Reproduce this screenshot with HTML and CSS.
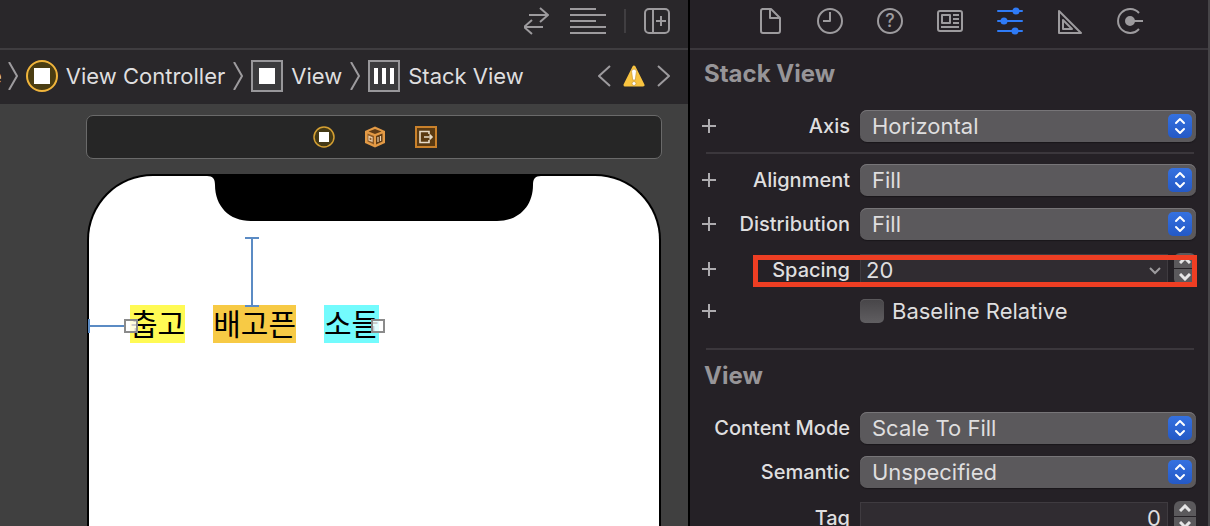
FILE: index.html
```html
<!DOCTYPE html>
<html lang="en">
<head>
    <meta charset="UTF-8">
    <title>Interface Builder</title>
    <link rel="stylesheet" href="styles.css">
</head>
<body>
    <main class="editor">
        <div class="toolbar">
            <button class="icon-button" aria-label="Refresh">
                <svg class="line-icon" width="28" height="28" viewBox="0 0 28 28"><path d="M5 8H24M16 1l8 7-8 7M19 20H0M8 13l-8 7 8 7"/></svg>
            </button>
            <button class="icon-button" aria-label="Adjust editor options">
                <svg class="line-icon" width="36" height="28" viewBox="0 0 36 28"><path d="M0 2h26M0 8h36M0 14h26M0 20h36M0 26h36"/></svg>
            </button>
            <span class="toolbar-divider"></span>
            <button class="icon-button" aria-label="Add editor">
                <svg class="line-icon" width="26" height="28" viewBox="0 0 26 28"><rect x="1" y="2" width="24" height="24" rx="4"/><path d="M9 2v24M17 9v10M12 14h10"/></svg>
            </button>
        </div>
        <div class="jump-bar">
            <nav class="crumbs">
                <span class="crumb crumb-cut">e</span>
                <svg class="line-icon" width="10" height="28" viewBox="0 0 10 28"><path d="M1 0l8 14-8 14"/></svg>
                <svg width="32" height="32" viewBox="0 0 32 32"><circle cx="16" cy="16" r="15" fill="#4a3d12" stroke="#f0b53c" stroke-width="2"/><path fill="#fff" d="M8 8h16v16H8z"/></svg>
                <span class="crumb">View Controller</span>
                <svg class="line-icon" width="10" height="28" viewBox="0 0 10 28"><path d="M1 0l8 14-8 14"/></svg>
                <svg width="32" height="32" viewBox="0 0 32 32"><path fill="#3b3b3d" stroke="#98979a" stroke-width="2" d="M1 1h30v30H1z"/><path fill="#fff" d="M8 8h16v16H8z"/></svg>
                <span class="crumb">View</span>
                <svg class="line-icon" width="10" height="28" viewBox="0 0 10 28"><path d="M1 0l8 14-8 14"/></svg>
                <svg width="32" height="32" viewBox="0 0 32 32"><path fill="#3b3b3d" stroke="#98979a" stroke-width="2" d="M1 1h30v30H1z"/><path fill="#fff" d="M6 8h4v16H6zM14 8h4v16h-4zM22 8h4v16h-4z"/></svg>
                <span class="crumb">Stack View</span>
            </nav>
            <div class="issues">
                <button class="icon-button" aria-label="Previous issue">
                    <svg class="line-icon" width="13" height="24" viewBox="0 0 13 24"><path d="M12 2L1 12l11 10"/></svg>
                </button>
                <svg width="22" height="24" viewBox="0 0 22 24"><path fill="#f9c440" stroke="#f9c440" stroke-width="3" stroke-linejoin="round" d="M11 3l9 18H2z"/><path fill="#fff" stroke="#c99a3a" stroke-width=".7" d="M8.600 7.500a2.400 2.400 0 0 1 4.800 0L12.300 16H9.700z"/><circle cx="11" cy="19.500" r="2" fill="#fff" stroke="#c99a3a" stroke-width=".7"/></svg>
                <button class="icon-button" aria-label="Next issue">
                    <svg class="line-icon" width="13" height="24" viewBox="0 0 13 24"><path d="M1 2l11 10L1 22"/></svg>
                </button>
            </div>
        </div>
        <div class="canvas">
            <div class="scene-dock">
                <svg width="22" height="22" viewBox="0 0 22 22"><circle cx="11" cy="11" r="10" fill="#453a16" stroke="#d5a032" stroke-width="1.500"/><path fill="#fff" d="M6 6h10v10H6z"/></svg>
                <svg width="22" height="22" viewBox="0 0 22 22">
                    <path fill="#e39a45" d="M11 .5l10 4.500v12l-10 4.500L1 17V5z"/>
                    <path fill="#5e3b16" d="M11 3l6.500 2.500L11 8 4.500 5.500z"/>
                    <path fill="#8d5b27" d="M3.500 7.500L10 10v8.500l-6.500-3z"/>
                    <path fill="#5e3b16" d="M18.500 7.500L12 10v8.500l6.500-3z"/>
                    <path fill="none" stroke="#e9cfae" stroke-width="1.200" d="M5 10.500v3.500l3 1.200v-3.500zM14 11v5M16.500 10v5"/>
                </svg>
                <svg width="22" height="22" viewBox="0 0 22 22"><path fill="#5a3a12" stroke="#c9812b" stroke-width="2" d="M1 1h20v20H1z"/><path fill="none" stroke="#e8dcc8" stroke-width="1.600" d="M14 8V5.500H5v11h9V14M9 11h8M14.500 8.500L17 11l-2.500 2.500"/></svg>
            </div>
            <div class="device">
                <svg class="notch" width="334" height="45" viewBox="0 0 334 45"><path d="M0 0H334C328 0 326 3 326 9C326 30 312 45 290 45H44C22 45 8 30 8 9C8 3 6 0 0 0Z"/></svg>
                <div class="stack-view" lang="ko">
                    <span class="label yellow">춥고</span>
                    <span class="label orange">배고픈</span>
                    <span class="label cyan">소들</span>
                    <span class="constraint leading"></span>
                    <span class="constraint top"></span>
                    <span class="handle handle-left"></span>
                    <span class="handle handle-right"></span>
                </div>
            </div>
        </div>
    </main>

    <aside class="inspector">
        <div class="tabs">
            <button class="icon-button" aria-label="File inspector">
                <svg class="line-icon" width="28" height="28" viewBox="0 0 28 28"><path d="M6 2h9l9 9v13a2 2 0 0 1-2 2H7a2 2 0 0 1-2-2V4a2 2 0 0 1 2-2M14 2v9h9"/></svg>
            </button>
            <button class="icon-button" aria-label="History inspector">
                <svg class="line-icon" width="28" height="28" viewBox="0 0 28 28"><circle cx="14" cy="14" r="12"/><path d="M14 5v9H7"/></svg>
            </button>
            <button class="icon-button" aria-label="Help inspector">
                <svg class="line-icon" width="28" height="28" viewBox="0 0 28 28"><circle cx="14" cy="14" r="12"/><text class="help-mark" x="14" y="20">?</text></svg>
            </button>
            <button class="icon-button" aria-label="Identity inspector">
                <svg class="line-icon" width="28" height="28" viewBox="0 0 28 28"><rect x="2" y="4" width="24" height="20" rx="2"/><path d="M6 8h8v8H6zM17 8h6M17 12h6M17 16h6M5 20h18"/></svg>
            </button>
            <button class="icon-button" aria-label="Attributes inspector">
                <svg class="line-icon active" width="28" height="28" viewBox="0 0 28 28"><path d="M2 4h24M2 14h24M2 24h24"/><circle cx="20" cy="4" r="2.500"/><circle cx="8" cy="14" r="2.500"/><circle cx="19" cy="24" r="2.500"/></svg>
            </button>
            <button class="icon-button" aria-label="Size inspector">
                <svg class="line-icon" width="28" height="28" viewBox="0 0 28 28"><path d="M3 4v22h22zM7 13v9h9z"/></svg>
            </button>
            <button class="icon-button" aria-label="Connections inspector">
                <svg class="line-icon" width="28" height="28" viewBox="0 0 28 28"><path d="M23 6a12 12 0 1 0 0 16M14 14h13"/><circle class="dot" cx="14" cy="14" r="4"/></svg>
            </button>
        </div>

        <section class="section">
            <h2>Stack View</h2>
            <div class="row">
                <button class="add" aria-label="Add axis variation"></button>
                <label for="axis">Axis</label>
                <div class="popup">
                    <select id="axis"><option>Horizontal</option><option>Vertical</option></select>
                    <svg class="arrows" width="24" height="24" viewBox="0 0 24 24"><path d="M8 9l4-4 4 4M8 15l4 4 4-4"/></svg>
                </div>
            </div>
            <hr>
            <div class="row">
                <button class="add" aria-label="Add alignment variation"></button>
                <label for="alignment">Alignment</label>
                <div class="popup">
                    <select id="alignment"><option>Fill</option><option>Leading</option><option>Center</option></select>
                    <svg class="arrows" width="24" height="24" viewBox="0 0 24 24"><path d="M8 9l4-4 4 4M8 15l4 4 4-4"/></svg>
                </div>
            </div>
            <div class="row">
                <button class="add" aria-label="Add distribution variation"></button>
                <label for="distribution">Distribution</label>
                <div class="popup">
                    <select id="distribution"><option>Fill</option><option>Fill Equally</option></select>
                    <svg class="arrows" width="24" height="24" viewBox="0 0 24 24"><path d="M8 9l4-4 4 4M8 15l4 4 4-4"/></svg>
                </div>
            </div>
            <div class="row row-field highlighted">
                <button class="add" aria-label="Add spacing variation"></button>
                <label for="spacing">Spacing</label>
                <div class="field">
                    <div class="combo">
                        <input type="text" id="spacing" value="20">
                        <svg class="combo-arrow" width="12" height="8" viewBox="0 0 12 8"><path d="M1 1l5 5 5-5"/></svg>
                    </div>
                    <div class="stepper">
                        <button aria-label="Increase spacing"><svg width="12" height="8" viewBox="0 0 12 8"><path d="M1 7l5-5 5 5"/></svg></button>
                        <button aria-label="Decrease spacing"><svg width="12" height="8" viewBox="0 0 12 8"><path d="M1 1l5 5 5-5"/></svg></button>
                    </div>
                </div>
            </div>
            <div class="row row-check">
                <button class="add" aria-label="Add baseline variation"></button>
                <div class="check">
                    <input type="checkbox" id="baseline">
                    <label for="baseline">Baseline Relative</label>
                </div>
            </div>
        </section>

        <section class="section section-view">
            <h2>View</h2>
            <div class="row">
                <label for="content-mode">Content Mode</label>
                <div class="popup">
                    <select id="content-mode"><option>Scale To Fill</option><option>Aspect Fit</option></select>
                    <svg class="arrows" width="24" height="24" viewBox="0 0 24 24"><path d="M8 9l4-4 4 4M8 15l4 4 4-4"/></svg>
                </div>
            </div>
            <div class="row">
                <label for="semantic">Semantic</label>
                <div class="popup">
                    <select id="semantic"><option>Unspecified</option><option>Playback</option></select>
                    <svg class="arrows" width="24" height="24" viewBox="0 0 24 24"><path d="M8 9l4-4 4 4M8 15l4 4 4-4"/></svg>
                </div>
            </div>
            <div class="row row-field">
                <label for="tag">Tag</label>
                <div class="field">
                    <div class="combo">
                        <input type="text" class="number" id="tag" value="0">
                    </div>
                    <div class="stepper">
                        <button aria-label="Increase tag"><svg width="12" height="8" viewBox="0 0 12 8"><path d="M1 7l5-5 5 5"/></svg></button>
                        <button aria-label="Decrease tag"><svg width="12" height="8" viewBox="0 0 12 8"><path d="M1 1l5 5 5-5"/></svg></button>
                    </div>
                </div>
            </div>
        </section>
    </aside>
</body>
</html>
```

FILE: styles.css
```css
* {
    box-sizing: border-box;
}
body {
    margin: 0;
    height: 100vh;
    display: flex;
    overflow: hidden;
    background: #252126;
    color: #dfdedf;
    font-family: Inter, "Liberation Sans", sans-serif;
    font-size: 22px;
}
button, input, select {
    margin: 0;
    padding: 0;
    border: 0;
    color: inherit;
    font: inherit;
}
svg {
    display: block;
    flex: none;
}
.icon-button {
    background: none;
    cursor: pointer;
}
.line-icon {
    fill: none;
    stroke: #9d9b9e;
    stroke-width: 2;
    stroke-linejoin: round;
}

/* editor */
.editor {
    flex: 1;
    min-width: 0;
    display: flex;
    flex-direction: column;
    background: #29272a;
}
.toolbar, .tabs {
    flex: none;
    height: 50px;
    padding-bottom: 6px;
    display: flex;
    align-items: center;
    border-bottom: 2px solid #3f3d40;
}
.toolbar {
    justify-content: flex-end;
    gap: 18px;
    padding-right: 18px;
}
.toolbar-divider {
    width: 2px;
    height: 24px;
    background: #403e41;
}
.jump-bar {
    flex: none;
    height: 54px;
    padding: 0 18px 2px 0;
    display: flex;
    align-items: center;
    justify-content: space-between;
}
.crumbs, .issues {
    display: flex;
    align-items: center;
    gap: 8px;
}
.issues {
    gap: 12px;
}
.crumb {
    white-space: nowrap;
}
.crumb-cut {
    margin: 0 -2px 0 -11px;
}
.canvas {
    flex: 1;
    min-height: 0;
    padding: 11px 26px 0 86px;
    display: flex;
    flex-direction: column;
    background: #404040;
}
.scene-dock {
    flex: none;
    height: 44px;
    padding-left: 2px;
    display: flex;
    align-items: center;
    justify-content: center;
    gap: 29px;
    background: #262626;
    border: 1px solid #6a6a6a;
    border-radius: 7px;
}
.device {
    flex: 1;
    margin: 15px 1px 0;
    border: 2px solid #000;
    border-bottom: 0;
    border-radius: 66px 66px 0 0;
    background: #fff;
}
.notch {
    margin: 0 auto;
}
.stack-view {
    position: relative;
    width: max-content;
    margin: 84px 0 0 41px;
    display: flex;
    gap: 28px;
    color: #000;
    font-family: "Noto Sans CJK KR", sans-serif;
    font-size: 30px;
    line-height: 34px;
}
.label {
    padding-bottom: 4px;
}
.yellow {
    background: #fffa54;
}
.orange {
    background: #f7ca45;
}
.cyan {
    background: #73fbfd;
}
.constraint {
    position: absolute;
    border: 0 solid #5b8bc4;
}
.leading {
    left: -42px;
    top: 14px;
    width: 36px;
    height: 14px;
    border-left-width: 2px;
    background: linear-gradient(#5b8bc4, #5b8bc4) center / 100% 2px no-repeat;
}
.top {
    left: 115px;
    top: -68px;
    width: 14px;
    height: 70px;
    border-top-width: 2px;
    border-bottom-width: 2px;
    background: linear-gradient(#5b8bc4, #5b8bc4) center / 2px 100% no-repeat;
}
.handle {
    position: absolute;
    top: 14px;
    width: 14px;
    height: 14px;
    border: 2px solid #8b8b8b;
    background: rgba(255, 255, 255, 0.8);
}
.handle-left {
    left: -6px;
}
.handle-right {
    right: -6px;
}

/* inspector */
.inspector {
    flex: 0 0 522px;
    border-left: 2px solid #000;
    border-right: 2px solid #474548;
}
.tabs {
    justify-content: center;
    gap: 32px;
    padding-left: 2px;
    border-bottom-color: #3b373c;
}
.active {
    stroke: #2f7bf6;
    fill: #2f7bf6;
    stroke-linecap: round;
}
.dot {
    fill: #9d9b9e;
}
.help-mark {
    fill: #9d9b9e;
    stroke: none;
    font-size: 18px;
    font-weight: 500;
    text-anchor: middle;
}
.section {
    padding: 0 12px;
    display: flex;
    flex-direction: column;
    gap: 12px;
}
h2 {
    margin: 0;
    color: #979598;
    font-size: 24px;
    font-weight: 700;
    line-height: 48px;
    padding-left: 2px;
}
hr {
    width: calc(100% - 6px);
    height: 2px;
    margin: -2px 2px -2px 4px;
    border: 0;
    background: #3b373c;
}
.section-view {
    position: relative;
    margin-top: 26px;
    padding-top: 4px;
}
.section-view::before {
    content: "";
    position: absolute;
    top: 0;
    left: 16px;
    right: 14px;
    height: 2px;
    background: #3b373c;
}
.row {
    position: relative;
    display: grid;
    grid-template-columns: 14px 134px 1fr;
    align-items: center;
    height: 32px;
}
.row-field {
    height: 34px;
}
.row-check {
    height: 24px;
}
.row > label {
    grid-column: 2;
    justify-self: end;
    font-size: 20px;
    font-weight: 500;
    white-space: nowrap;
}
.row-field > label {
    padding-top: 2px;
}
.popup, .field, .check {
    grid-column: 3;
    margin-left: 10px;
}
.add {
    width: 14px;
    height: 14px;
    background:
        linear-gradient(#aeacaf, #aeacaf) center / 2px 100% no-repeat,
        linear-gradient(#aeacaf, #aeacaf) center / 100% 2px no-repeat;
}
.popup {
    position: relative;
}
.popup select {
    appearance: none;
    display: block;
    width: 100%;
    height: 32px;
    padding: 0 36px 0 12px;
    border-radius: 7px;
    background: #5b595c;
    box-shadow: inset 0 1px #777578, 0 1px 1px #1a171b;
}
.arrows {
    position: absolute;
    top: 4px;
    right: 4px;
    border-radius: 5px;
    background: linear-gradient(#3571e0, #2459c6);
    fill: none;
    stroke: #fff;
    stroke-width: 2;
    stroke-linecap: round;
    stroke-linejoin: round;
    pointer-events: none;
}
.field {
    display: flex;
    gap: 6px;
}
.combo {
    position: relative;
    flex: 1;
}
.combo input {
    display: block;
    width: 100%;
    height: 30px;
    padding: 2px 6px 0 5px;
    border: 1px solid #3f3b40;
    background: #302c31;
}
.combo .number {
    text-align: right;
}
.combo-arrow {
    position: absolute;
    top: 13px;
    right: 7px;
    fill: none;
    stroke: #9d9b9e;
    stroke-width: 2;
}
.stepper {
    width: 22px;
    height: 32px;
    margin-top: -1px;
    display: flex;
    flex-direction: column;
    gap: 1px;
    border-radius: 6px;
    overflow: hidden;
}
.stepper button {
    flex: 1;
    display: flex;
    align-items: center;
    justify-content: center;
    background: #5b595c;
}
.stepper svg {
    fill: none;
    stroke: #e6e5e6;
    stroke-width: 3;
}
.check {
    display: flex;
    align-items: center;
    gap: 8px;
}
.check input {
    appearance: none;
    width: 24px;
    height: 24px;
    border-radius: 5px;
    background: linear-gradient(#474548, #605e61);
    box-shadow: inset 0 1px #5b595c;
}
.highlighted::after {
    content: "";
    position: absolute;
    inset: 3px -1px -1px 51px;
    border: 5px solid #ee3e23;
    pointer-events: none;
}
```
